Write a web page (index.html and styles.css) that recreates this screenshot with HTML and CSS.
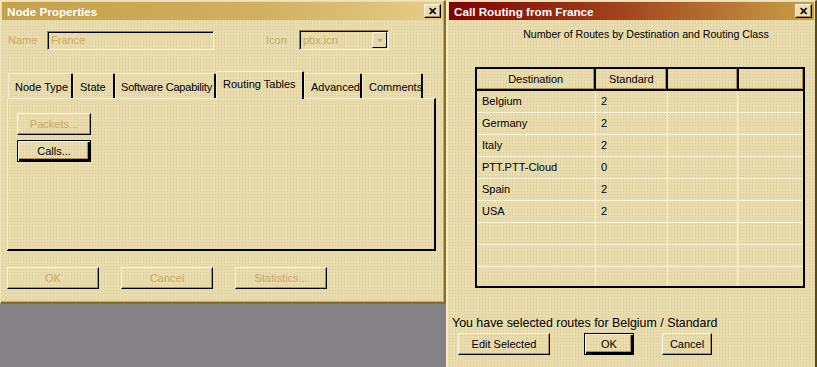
FILE: index.html
```
<!DOCTYPE html>
<html>
	<head>
		<meta charset="UTF-8">
		<title>Node Properties</title>
		<link rel="stylesheet" href="styles.css">
	</head>
	<body>
		<div class="screen">
			<div class="left-col">
				<div class="dialog node-dlg">
					<div class="titlebar gold">
						<span class="title">Node Properties</span>
						<span class="close">&#10005;</span>
					</div>
					<div class="name-row">
						<span class="lbl name-lbl">Name</span>
						<span class="field name-field">France</span>
						<span class="lbl icon-lbl">Icon</span>
						<span class="field icon-field">pbx.icn<span class="drop"><span class="arrow"></span></span></span>
					</div>
					<ul class="tabs">
						<li class="t1">Node Type</li>
						<li class="t2">State</li>
						<li class="t3">Software Capability</li>
						<li class="t4 select">Routing Tables</li>
						<li class="t5">Advanced</li>
						<li class="t6">Comments</li>
					</ul>
					<div class="panel">
						<a href="#" class="btn off pk">Packets...</a>
						<a href="#" class="btn def calls">Calls...</a>
					</div>
					<div class="actions">
						<a href="#" class="btn off wide">OK</a>
						<a href="#" class="btn off wide">Cancel</a>
						<a href="#" class="btn off wide">Statistics...</a>
					</div>
				</div>
				<div class="desktop"></div>
			</div>
			<div class="dialog route-dlg">
				<div class="titlebar red">
					<span class="title">Call Routing from France</span>
					<span class="close">&#10005;</span>
				</div>
				<div class="subtitle">Number of Routes by Destination and Routing Class</div>
				<table class="routes">
					<tr><th class="c1">Destination</th><th class="c2">Standard</th><th class="c3"></th><th class="c4"></th></tr>
					<tr><td>Belgium</td><td>2</td><td></td><td></td></tr>
					<tr><td>Germany</td><td>2</td><td></td><td></td></tr>
					<tr><td>Italy</td><td>2</td><td></td><td></td></tr>
					<tr><td>PTT.PTT-Cloud</td><td>0</td><td></td><td></td></tr>
					<tr><td>Spain</td><td>2</td><td></td><td></td></tr>
					<tr><td>USA</td><td>2</td><td></td><td></td></tr>
					<tr><td></td><td></td><td></td><td></td></tr>
					<tr><td></td><td></td><td></td><td></td></tr>
					<tr class="last"><td></td><td></td><td></td><td></td></tr>
				</table>
				<div class="status">You have selected routes for Belgium / Standard</div>
				<div class="route-actions">
					<a href="#" class="btn edit">Edit Selected</a>
					<a href="#" class="btn def ok">OK</a>
					<a href="#" class="btn cancel">Cancel</a>
				</div>
			</div>
		</div>
	</body>
</html>
```
FILE: styles.css
```
*{
	margin:0;
	padding:0;
	list-style:none;
	box-sizing:border-box;
}
body{
	width:817px;
	height:367px;
	overflow:hidden;
	font-family:"Liberation Sans",Arial,sans-serif;
	font-size:11px;
	color:#000;
	background:#858287;
}
a{
	text-decoration:none;
	color:#000;
}
.screen{
	display:flex;
	height:367px;
}
.left-col{
	width:446px;
	display:flex;
	flex-direction:column;
}
.desktop{
	flex:1;
	background:#858287;
}
/* beige dialog with a fine dotted texture */
.dialog{
	background-color:#e8dbae;
	background-image:radial-gradient(circle,#dccb92 0.7px,transparent 0.9px);
	background-size:3px 3px;
	border-top:1px solid #f0e4bc;
	border-left:1px solid #f0e4bc;
	padding:1px;
}
.node-dlg{
	height:304px;
	border-right:2px solid #8a6c28;
	border-bottom:2px solid #8a6c28;
	box-shadow:inset -1px -1px #c8a85c;
}
.route-dlg{
	width:371px;
	border-left:2px solid #f6ecc8;
	border-right:2px solid #5a4818;
	padding:1px 1px 0 1px;
}
.titlebar{
	height:18px;
	display:flex;
	align-items:center;
	justify-content:space-between;
	padding:0 2px 0 5px;
	color:#fff;
	font-weight:bold;
	font-size:11.7px;
}
.gold{
	background:linear-gradient(to right,#c6a04a,#d2b062 60%,#e6cd88);
}
.red{
	background:linear-gradient(to right,#800000,#a0401c 45%,#c8a048);
}
.close{
	width:17px;
	height:14px;
	background:#ecdfb4;
	border-top:1px solid #fff8e0;
	border-left:1px solid #fff8e0;
	border-right:1px solid #000;
	border-bottom:1px solid #000;
	box-shadow:inset -1px -1px #a88c48;
	color:#000;
	font-size:11px;
	line-height:12px;
	text-align:center;
	font-weight:bold;
}
.name-row{
	display:flex;
	align-items:center;
	height:20px;
	margin-top:10px;
}
.lbl{
	color:#c9aa60;
}
.name-lbl{
	margin-left:6px;
	width:39px;
}
.icon-lbl{
	margin-left:52px;
	width:33px;
}
.field{
	height:19px;
	line-height:16px;
	padding-left:3px;
	color:#c9aa60;
	border-top:1px solid #9c8040;
	border-left:1px solid #9c8040;
	border-right:1px solid #fff6dc;
	border-bottom:1px solid #fff6dc;
	box-shadow:inset 1px 1px #000;
}
.name-field{
	width:167px;
}
.icon-field{
	width:90px;
	height:20px;
	display:flex;
	justify-content:space-between;
	align-items:center;
	line-height:normal;
}
.drop{
	width:15px;
	height:16px;
	margin-right:1px;
	border-top:1px solid #fff6dc;
	border-left:1px solid #fff6dc;
	border-right:1px solid #000;
	border-bottom:1px solid #000;
	display:flex;
	align-items:center;
	justify-content:center;
}
.arrow{
	border-left:3px solid transparent;
	border-right:3px solid transparent;
	border-top:3px solid #c9aa60;
}
.tabs{
	display:flex;
	align-items:flex-end;
	height:27px;
	margin:21px 0 0 6px;
	position:relative;
	z-index:1;
}
.tabs li{
	height:25px;
	line-height:26px;
	padding-left:6px;
	border-top:1px solid #f6ecc8;
	border-left:1px solid #f6ecc8;
	border-right:2px solid #000;
	border-top-left-radius:2px;
	border-top-right-radius:2px;
	white-space:nowrap;
	overflow:hidden;
}
.tabs .t1{width:65px;}
.tabs .t2{width:42px;}
.tabs .t3{width:101px;padding-left:5px;letter-spacing:-0.2px;}
.tabs .t4{width:88px;}
.tabs .t5{width:58px;}
.tabs .t6{width:61px;}
.tabs li.select{
	height:28px;
	line-height:25px;
	margin-bottom:-1px;
	padding-left:6px;
	background-color:#e8dbae;
	background-image:radial-gradient(circle,#dccb92 0.7px,transparent 0.9px);
	background-size:3px 3px;
}
.panel{
	width:429px;
	height:153px;
	margin-left:5px;
	border-top:1px solid #f6ecc8;
	border-left:1px solid #f6ecc8;
	border-right:2px solid #000;
	border-bottom:2px solid #000;
	padding:14px 0 0 9px;
	display:flex;
	flex-direction:column;
	gap:5px;
}
.btn{
	display:flex;
	align-items:center;
	justify-content:center;
	height:22px;
	border-top:1px solid #fff8e0;
	border-left:1px solid #fff8e0;
	border-right:1px solid #000;
	border-bottom:1px solid #000;
	box-shadow:inset -1px -1px #b09048;
	white-space:nowrap;
}
.btn.off{
	color:#c9aa60;
}
.btn.def{
	border:1px solid #000;
	box-shadow:inset 1px 1px #fff8e0,inset -2px -2px #000,inset -3px -3px #b09048;
}
.pk,.calls{
	width:74px;
}
.actions{
	display:flex;
	gap:22px;
	margin:16px 0 0 5px;
}
.wide{
	width:92px;
}
.subtitle{
	text-align:center;
	margin-top:8px;
	height:14px;
	padding-left:29px;
	font-size:10.6px;
}
.routes{
	margin:25px 0 0 26px;
	width:330px;
	border-collapse:collapse;
	border:2px solid #000;
}
.routes th{
	height:22px;
	font-weight:normal;
	border-top:1px solid #fff6dc;
	border-left:1px solid #fff6dc;
	border-right:2px solid #000;
	border-bottom:2px solid #000;
	box-shadow:inset -1px -1px #b09048;
}
.routes .c1{width:120px;}
.routes .c2{width:72px;}
.routes .c3{width:71px;}
.routes .c4{width:67px;}
.routes td{
	height:22px;
	padding-left:5px;
	border-right:1px solid #fbf3d8;
	border-bottom:1px solid #fbf3d8;
}
.routes .last td{
	height:21px;
	border-bottom:none;
}
.status{
	margin:28px 0 0 3px;
	height:14px;
	font-size:12.4px;
}
.route-actions{
	display:flex;
	margin:3px 0 0 9px;
}
.edit{
	width:92px;
}
.ok{
	width:50px;
	margin-left:34px;
}
.cancel{
	width:50px;
	margin-left:28px;
}
```
